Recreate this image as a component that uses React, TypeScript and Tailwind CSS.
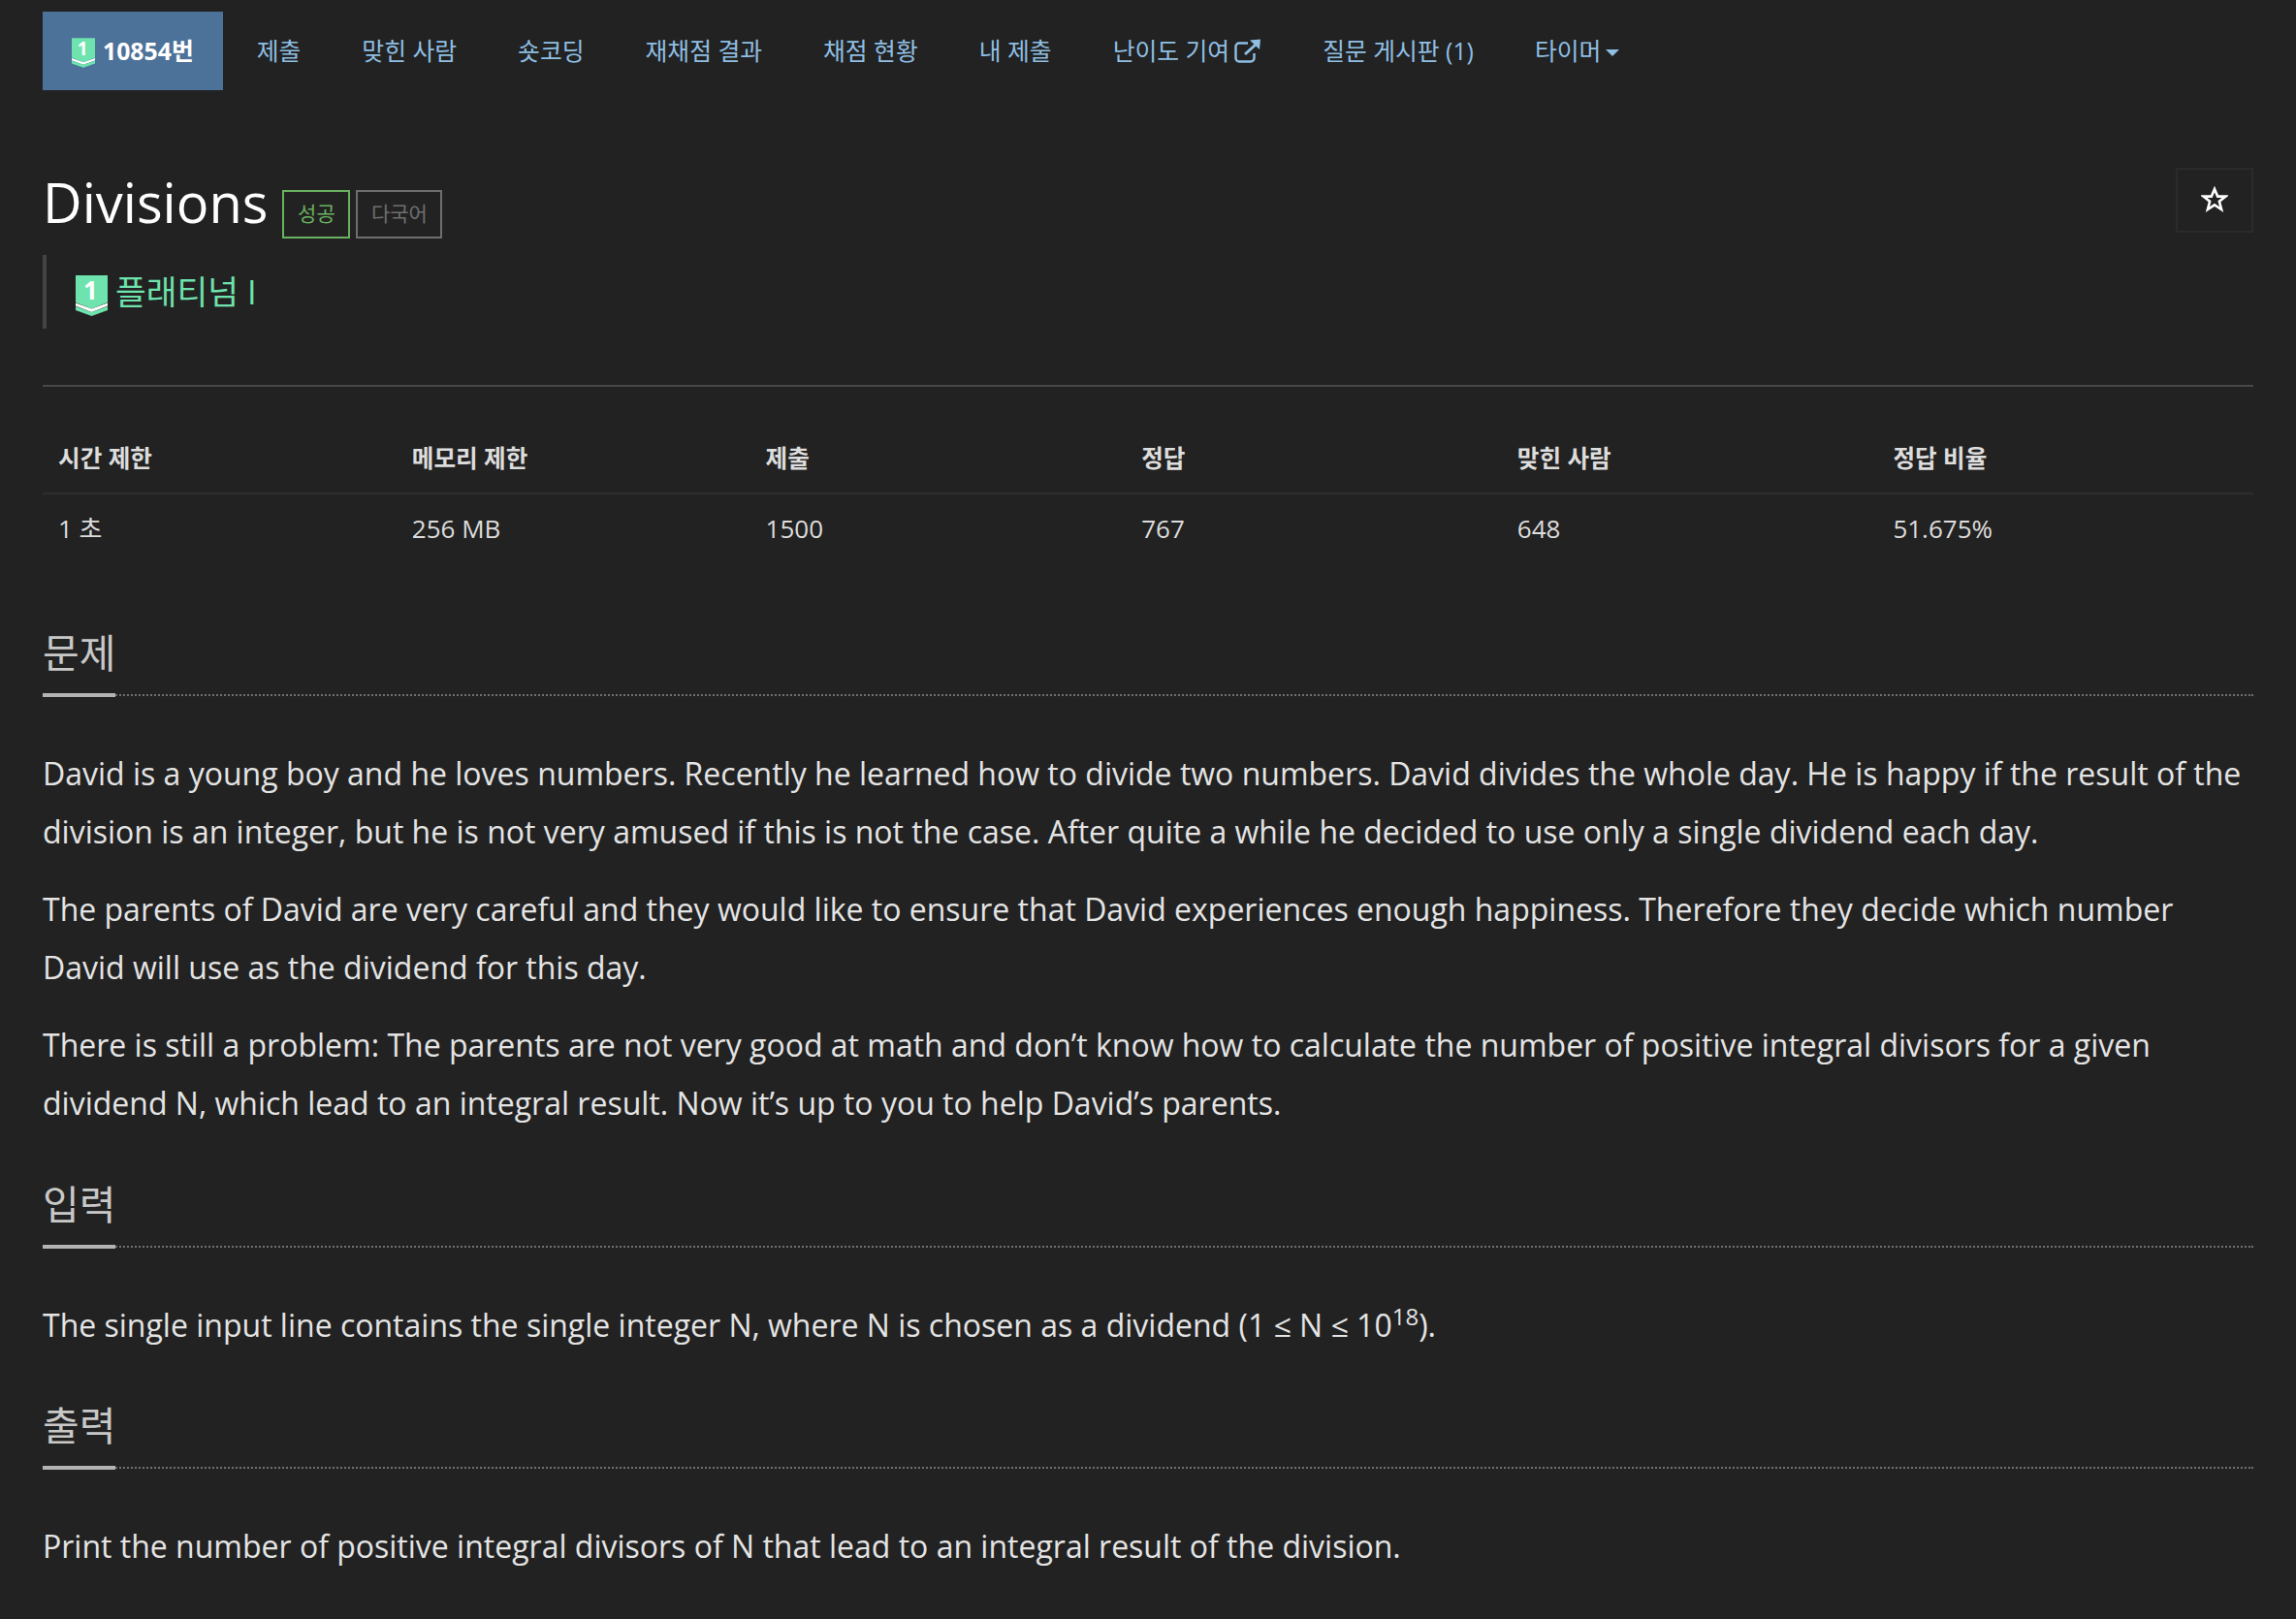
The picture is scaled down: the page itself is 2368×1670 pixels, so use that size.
const FONT = "font-['Open_Sans','Noto_Sans_CJK_KR',sans-serif]";

const tabs = ["제출", "맞힌 사람", "숏코딩", "재채점 결과", "채점 현황", "내 제출"];

function TierIcon({ className }: { className: string }) {
  return (
    <svg viewBox="0 0 33 42" className={`overflow-visible ${className}`}>
      <path d="M0 0H33V28L16.5 34.5L0 28Z" fill="#6ee3ad" />
      <path d="M0 28.5L16.5 34.5L33 28.5V31.5L16.5 38L0 31.5Z" fill="#ffffff" />
      <path d="M0 32L16.5 38L33 32V36L16.5 42L0 36Z" fill="#6ee3ad" />
      <text x="15.5" y="25" textAnchor="middle" fontSize="26" fontWeight="700" fill="#ffffff" fontFamily="Open Sans, sans-serif">
        1
      </text>
    </svg>
  );
}

function SectionTitle({ title }: { title: string }) {
  return (
    <div className="h-[70px] mb-[50px] border-b-2 border-dotted border-[#6f6f6f]">
      <h2 className="inline-block h-[71px] border-b-4 border-[#b3b3b3] text-[41px] leading-[50px] font-normal text-[#c8c8c8]">
        {title}
      </h2>
    </div>
  );
}

export default function App() {
  return (
    <div className={`${FONT} min-h-[1670px] overflow-hidden bg-[#222222] px-[44px] pt-[12px] text-[#dddddd]`}>
      <nav className="flex h-[81px] items-center text-[24.8px] text-[#8fbfe3]">
        <a className="mr-[5px] flex h-[81px] items-center gap-[8px] bg-[#4d7299] px-[30px] font-bold text-white">
          <TierIcon className="mt-[4px] h-[31px] w-[24px]" />
          10854번
        </a>
        {tabs.map((t) => (
          <a key={t} className="mr-[3px] px-[30px]">
            {t}
          </a>
        ))}
        <a className="mr-[3px] flex items-center gap-[5px] px-[30px]">
          난이도 기여
          <svg viewBox="0 0 28 25" className="h-[25px] w-[28px]" fill="none" stroke="currentColor" strokeWidth="2.4">
            <path d="M14 4.5H5a3.5 3.5 0 0 0-3.5 3.5v12a3.5 3.5 0 0 0 3.5 3.5h12a3.5 3.5 0 0 0 3.5-3.5v-5" />
            <path d="M11 16L22 6" strokeWidth="3" />
            <path d="M16 1.5L27 0.5L26 11Z" fill="currentColor" stroke="none" />
          </svg>
        </a>
        <a className="mr-[3px] px-[30px]">질문 게시판 (1)</a>
        <a className="flex items-center gap-[5px] px-[30px]">
          타이머
          <span className="mt-[3px] border-x-[7px] border-t-[7px] border-x-transparent border-t-[#8fbfe3]" />
        </a>
      </nav>

      <div className="mt-[77px] flex h-[229px] items-start justify-between border-b-2 border-[#484848]">
        <div>
          <div className="flex items-end">
            <h1 className="text-[56px] leading-[76px] font-normal text-white">Divisions</h1>
            <span className="ml-[15px] flex h-[50px] w-[70px] items-center justify-center border-2 border-[#68b15f] text-[21px] text-[#68b15f]">
              성공
            </span>
            <span className="ml-[6px] flex h-[50px] w-[89px] items-center justify-center border-2 border-[#6e6e6e] text-[21px] text-[#6e6e6e]">
              다국어
            </span>
          </div>
          <div className="mt-[17px] flex h-[76px] items-center gap-[8px] border-l-4 border-[#444444] pl-[30px] text-[34.5px] text-[#6ee3ad]">
            <TierIcon className="mt-[8px] h-[42px] w-[33px]" />
            플래티넘 I
          </div>
        </div>
        <button className="mt-[3px] flex h-[67px] w-[80px] items-center justify-center border-2 border-[#2b2b2b]">
          <svg viewBox="0 0 28 27" className="mb-[2px] mr-[1px] h-[27px] w-[28px]" fill="none" stroke="#ffffff" strokeWidth="2.6">
            <path d="M14 3L17.2 10.6H25.4L18.9 15.8L21.1 24L14 19.4L6.9 24L9.1 15.8L2.6 10.6H10.8Z" />
          </svg>
        </button>
      </div>

      <table className="mt-[40px] w-full table-fixed border-collapse text-left text-[26px]">
        <thead>
          <tr className="h-[70px] border-b-2 border-[#2d2d2d] text-[24.6px]">
            <th className="w-[16%] px-[16px] font-bold">시간 제한</th>
            <th className="w-[16%] px-[16px] font-bold">메모리 제한</th>
            <th className="w-[17%] px-[16px] font-bold">제출</th>
            <th className="w-[17%] px-[16px] font-bold">정답</th>
            <th className="w-[17%] px-[16px] font-bold">맞힌 사람</th>
            <th className="w-[17%] px-[16px] font-bold">정답 비율</th>
          </tr>
        </thead>
        <tbody>
          <tr className="h-[72px]">
            <td className="px-[16px]">1 초</td>
            <td className="px-[16px]">256 MB</td>
            <td className="px-[16px]">1500</td>
            <td className="px-[16px]">767</td>
            <td className="px-[16px]">648</td>
            <td className="px-[16px]">51.675%</td>
          </tr>
        </tbody>
      </table>

      <div className="mt-[67px]">
        <SectionTitle title="문제" />
        <div className="mb-[49px] text-[32px] leading-[60px] text-[#e4e4e4]">
          <p className="mb-[20px]">
            David is a young boy and he loves numbers. Recently he learned how to divide two numbers. David divides the whole day. He is happy if the result of the division is an integer, but he is not very amused if this is not the case. After quite a while he decided to use only a single dividend each day.
          </p>
          <p className="mb-[20px]">
            The parents of David are very careful and they would like to ensure that David experiences enough happiness. Therefore they decide which number David will use as the dividend for this day.
          </p>
          <p>
            There is still a problem: The parents are not very good at math and don’t know how to calculate the number of positive integral divisors for a given dividend N, which lead to an integral result. Now it’s up to you to help David’s parents.
          </p>
        </div>
        <SectionTitle title="입력" />
        <p className="mb-[48px] text-[32px] leading-[60px] text-[#e4e4e4]">
          The single input line contains the single integer N, where N is chosen as a dividend (1 ≤ N ≤ 10<sup className="text-[24px]">18</sup>).
        </p>
        <SectionTitle title="출력" />
        <p className="text-[32px] leading-[60px] text-[#e4e4e4]">
          Print the number of positive integral divisors of N that lead to an integral result of the division.
        </p>
      </div>
    </div>
  );
}
